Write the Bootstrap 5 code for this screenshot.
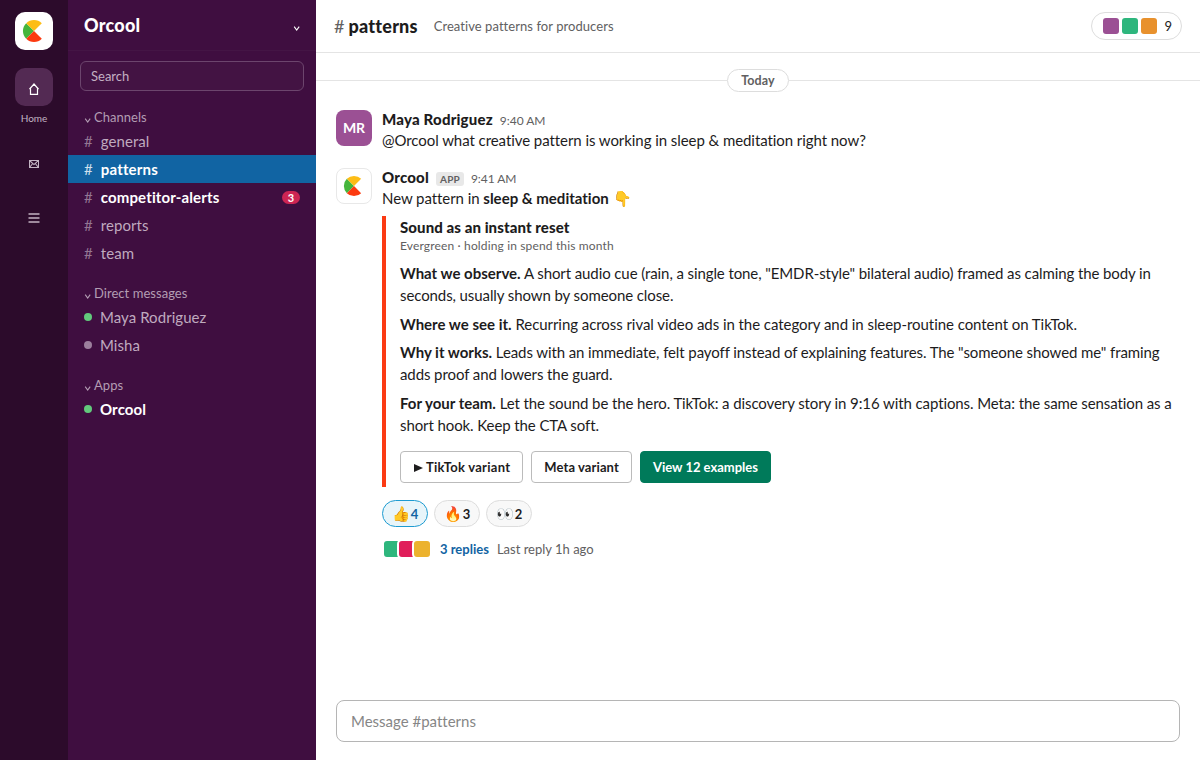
<!DOCTYPE html>
<html lang="en">
<head>
<meta charset="utf-8">
<meta name="viewport" content="width=device-width, initial-scale=1">
<title>Orcool – patterns</title>
<link rel="stylesheet" href="https://cdn.jsdelivr.net/npm/bootstrap@5.3.0/dist/css/bootstrap.min.css">
<style>
  body { font-family: Lato, "Liberation Sans", sans-serif; font-size: 15px; line-height: 22px; color: #1d1c1d; background: #fff; font-variant-ligatures: none; }
  b { font-weight: 700; letter-spacing: 0; }
  .fw-heavy { font-weight: 900; }
  .rail { width: 68px; background: #2c0b2b; padding-top: 12px; color: #c3b4c3; }
  .rail-logo { width: 38px; height: 38px; border-radius: 10px; background: #fff; margin-bottom: 18px; }
  .rail-item { width: 38px; height: 38px; border-radius: 10px; font-size: 16px; }
  .rail-item.on { background: #532a53; color: #fff; }
  .rail-label { font-size: 10px; line-height: 15px; margin-top: 5px; margin-bottom: 19px; }
  .side { width: 248px; background: #3f0e40; color: #bfaabf; }
  .side-head { height: 51px; border-bottom: 1px solid #441545; padding: 0 16px; color: #fff; }
  .side-title { font-size: 18px; letter-spacing: .25px; }
  .search-box { height: 30px; margin: 10px 12px 0; padding: 0 10px; border: 1px solid #6c456d; border-radius: 6px; background: #431343; font-size: 13px; color: #c3b0c3; }
  .sec { height: 20px; margin-top: 16px; padding: 0 16px; font-size: 13px; line-height: 20px; letter-spacing: .04px; color: #b39db3; }
  .chev { width: 7px; height: 5px; margin: 7px 3px 0 0; }
  .entry { height: 28px; padding: 0 16px; letter-spacing: .06px; }
  .entry.on { background: #1164a3; color: #fff; font-weight: 700; letter-spacing: .17px; }
  .entry.unread { color: #fff; font-weight: 700; letter-spacing: .13px; }
  .hash { width: 16.8px; font-weight: 400; color: #937693; }
  .entry.on .hash { color: #cfe0ed; }
  .dot { width: 8px; height: 8px; margin-right: 8px; background: #9c7f9d; }
  .dot.live { background: #62c97c; }
  .count { width: 18px; height: 13px; font-size: 11px; line-height: 13px; background: #cd2553; color: #fff; }
  .top-bar { height: 53px; border-bottom: 1px solid #e4e4e4; padding: 0 18px; }
  .top-title { font-size: 18px; letter-spacing: .2px; }
  .top-title .grey { letter-spacing: -.3px; }
  .top-topic { font-size: 13px; color: #616061; margin-left: 16px; letter-spacing: .06px; }
  .grey { color: #616061; }
  .members { height: 28px; padding: 0 9px 0 11px; gap: 3px; border: 1px solid #ddd; font-size: 13px; }
  .sq { width: 16px; height: 16px; border-radius: 3px; }
  .day { height: 23px; margin-top: 16px; }
  .day-line { height: 1px; background: #e4e4e4; }
  .day-pill { width: 62px; height: 23px; border: 1px solid #ddd; font-size: 12.5px; line-height: 21px; letter-spacing: .1px; color: #616061; }
  .msg { padding: 0 20px; gap: 10px; }
  .ava { width: 36px; height: 36px; border-radius: 8px; }
  .ava-mr { background: #9b5094; color: #fff; font-size: 14px; }
  .ava-app { border: 1px solid #e8e8e8; }
  .who { height: 19px; line-height: 19px; letter-spacing: .2px; }
  .time { font-size: 12px; color: #616061; margin-left: 7px; letter-spacing: -.05px; }
  .app-tag { background: #e8e8e8; color: #616061; font-size: 10px; line-height: 14px; padding: 0 4px; border-radius: 3px; margin-left: 7px; }
  .attach { border-left: 4px solid #fb3a13; padding: 0 0 4px 14px; margin-top: 7px; }
  .attach p { margin: 0 0 6.7px; letter-spacing: -.095px; }
  .attach p.roomy { letter-spacing: -.055px; }
  .attach-title { letter-spacing: .08px; }
  .attach-sub { font-size: 12px; line-height: 15px; color: #616061; margin-bottom: 9px; letter-spacing: .15px; }
  .ask { letter-spacing: -.065px; }
  .act { height: 32px; padding: 0 12px; border: 1px solid #bbb; border-radius: 4px; font-size: 13px; font-weight: 700; line-height: 30px; letter-spacing: .1px; background: #fff; color: #1d1c1d; }
  .act.main-act { background: #007a5a; border-color: #007a5a; color: #fff; letter-spacing: 0; }
  .act.play { letter-spacing: .27px; }
  .react { height: 27px; width: 46px; gap: 1px; border: 1px solid #ddd; border-radius: 14px; background: #f8f8f8; font-size: 13px; font-weight: 700; }
  .react.mine { background: #e8f5fa; border-color: #1d9bd1; color: #1264a3; }
  .react span { font-size: 14.5px; font-weight: 400; }
  .mini { width: 20px; height: 20px; border: 2px solid #fff; border-radius: 5px; }
  .mini + .mini { margin-left: -5px; }
  .reply-link { color: #1264a3; }
  .composer { height: 42px; margin: 0 20px 18px; padding: 0 14px; border: 1px solid #b5b5b5; border-radius: 8px; color: #868686; }
</style>
</head>
<body>
<svg class="d-none">
  <symbol id="mark-pie" viewBox="0 0 24 24">
    <path fill="#45b53c" d="M12 12 4.2 4.2a11 11 0 0 0 0 15.6z"/>
    <path fill="#fdbd16" d="M12 12 4.2 4.2a11 11 0 0 1 15.6 0z"/>
    <path fill="#fc3a10" d="M12 12 4.2 19.8a11 11 0 0 0 15.6 0z"/>
  </symbol>
  <symbol id="chev" viewBox="0 0 7 5"><path d="M1.2.6 3.7 4 6.2.6" fill="none" stroke="currentColor" stroke-width="1.1"/></symbol>
</svg>
<div class="d-flex vh-100 overflow-hidden">
  <nav class="rail d-flex flex-column align-items-center flex-shrink-0">
    <div class="rail-logo d-flex align-items-center justify-content-center"><svg width="24" height="24"><use href="#mark-pie"/></svg></div>
    <div class="rail-item on d-flex align-items-center justify-content-center"><svg width="10" height="12" viewBox="0 0 10 12" style="margin-top:3px"><path d="M1.5 11.4V5L5 1l3.5 4v6.4zM.4 6.2 1.5 5M9.6 6.2 8.5 5" fill="none" stroke="currentColor" stroke-width="1.2"/></svg></div>
    <div class="rail-label">Home</div>
    <div class="rail-item d-flex align-items-center justify-content-center"><svg width="10" height="8" viewBox="0 0 10 8"><path d="M.5.5h9v7h-9zM.5.5 5 4.6 9.5.5M.5 7.5l3.2-4M9.5 7.5l-3.2-4" fill="none" stroke="currentColor" stroke-width="1.1"/></svg></div>
    <div class="rail-item d-flex align-items-center justify-content-center mt-3"><svg width="12" height="10" viewBox="0 0 12 10"><path d="M.5 1h11M.5 5h11M.5 9h11" stroke="currentColor" stroke-width="1.3"/></svg></div>
  </nav>

  <aside class="side flex-shrink-0">
    <div class="side-head d-flex align-items-center justify-content-between"><span class="side-title fw-heavy">Orcool</span><svg class="chev me-0"><use href="#chev"/></svg></div>
    <div class="search-box d-flex align-items-center">Search</div>
    <div class="sec d-flex align-items-center"><svg class="chev"><use href="#chev"/></svg>Channels</div>
    <div class="entry d-flex align-items-center"><span class="hash">#</span>general</div>
    <div class="entry on d-flex align-items-center"><span class="hash">#</span>patterns</div>
    <div class="entry unread d-flex align-items-center"><span class="hash">#</span>competitor-alerts<span class="count rounded-pill text-center ms-auto">3</span></div>
    <div class="entry d-flex align-items-center"><span class="hash">#</span>reports</div>
    <div class="entry d-flex align-items-center"><span class="hash">#</span>team</div>
    <div class="sec d-flex align-items-center"><svg class="chev"><use href="#chev"/></svg>Direct messages</div>
    <div class="entry d-flex align-items-center"><span class="dot live rounded-circle"></span>Maya Rodriguez</div>
    <div class="entry d-flex align-items-center"><span class="dot rounded-circle"></span>Misha</div>
    <div class="sec d-flex align-items-center"><svg class="chev"><use href="#chev"/></svg>Apps</div>
    <div class="entry unread d-flex align-items-center"><span class="dot live rounded-circle"></span>Orcool</div>
  </aside>

  <main class="flex-grow-1 d-flex flex-column">
    <header class="top-bar d-flex align-items-center">
      <div class="top-title fw-heavy"><span class="grey fw-normal">#</span> patterns</div>
      <div class="top-topic">Creative patterns for producers</div>
      <div class="members d-flex align-items-center rounded-pill ms-auto">
        <span class="sq" style="background:#9b5094"></span><span class="sq" style="background:#2eb67d"></span><span class="sq" style="background:#e8912d"></span><span class="ms-1">9</span>
      </div>
    </header>

    <div class="day d-flex align-items-center">
      <div class="day-line flex-grow-1"></div><div class="day-pill rounded-pill fw-bold text-center">Today</div><div class="day-line flex-grow-1"></div>
    </div>

    <div class="msg d-flex" style="margin-top:18px">
      <div class="ava ava-mr fw-bold d-flex align-items-center justify-content-center flex-shrink-0">MR</div>
      <div>
        <div class="who d-flex align-items-baseline"><span class="fw-heavy">Maya Rodriguez</span><span class="time">9:40 AM</span></div>
        <div class="ask">@Orcool what creative pattern is working in sleep &amp; meditation right now?</div>
      </div>
    </div>

    <div class="msg d-flex" style="margin-top:17px">
      <div class="ava ava-app d-flex align-items-center justify-content-center flex-shrink-0"><svg width="22" height="22"><use href="#mark-pie"/></svg></div>
      <div class="flex-grow-1">
        <div class="who d-flex align-items-baseline"><span class="fw-heavy">Orcool</span><span class="app-tag fw-bold">APP</span><span class="time">9:41 AM</span></div>
        <div class="ask">New pattern in <b>sleep &amp; meditation</b> 👇</div>
        <div class="attach">
          <div class="attach-title fw-heavy">Sound as an instant reset</div>
          <div class="attach-sub">Evergreen · holding in spend this month</div>
          <p><b>What we observe.</b> A short audio cue (rain, a single tone, "EMDR-style" bilateral audio) framed as calming the body in seconds, usually shown by someone close.</p>
          <p class="roomy"><b>Where we see it.</b> Recurring across rival video ads in the category and in sleep-routine content on TikTok.</p>
          <p><b>Why it works.</b> Leads with an immediate, felt payoff instead of explaining features. The "someone showed me" framing adds proof and lowers the guard.</p>
          <p><b>For your team.</b> Let the sound be the hero. TikTok: a discovery story in 9:16 with captions. Meta: the same sensation as a short hook. Keep the CTA soft.</p>
          <div class="d-flex gap-2" style="margin-top:15px">
            <button class="act play"><svg width="9" height="8" viewBox="0 0 9 8" style="margin:-2px 3px 0 1px"><path d="M0 0 9 4 0 8z" fill="currentColor"/></svg>TikTok variant</button><button class="act">Meta variant</button><button class="act main-act">View 12 examples</button>
          </div>
        </div>
        <div class="d-flex" style="gap:6px;margin-top:13px">
          <div class="react mine d-flex align-items-center justify-content-center"><span>👍</span>4</div>
          <div class="react d-flex align-items-center justify-content-center"><span>🔥</span>3</div>
          <div class="react d-flex align-items-center justify-content-center"><span>👀</span>2</div>
        </div>
        <div class="d-flex align-items-center" style="margin-top:11px;font-size:13px">
          <span class="mini" style="background:#2eb67d"></span><span class="mini" style="background:#e01e5a"></span><span class="mini" style="background:#ecb22e"></span>
          <span class="reply-link fw-bold ms-2">3 replies</span><span class="grey ms-2">Last reply 1h ago</span>
        </div>
      </div>
    </div>

    <div class="composer d-flex align-items-center mt-auto">Message #patterns</div>
  </main>
</div>
<script src="https://cdn.jsdelivr.net/npm/bootstrap@5.3.0/dist/js/bootstrap.bundle.min.js"></script>
</body>
</html>
